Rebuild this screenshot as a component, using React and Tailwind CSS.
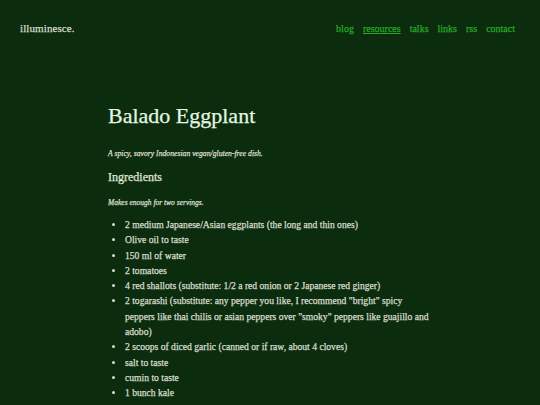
export default function App() {
  const items = [
    "2 medium Japanese/Asian eggplants (the long and thin ones)",
    "Olive oil to taste",
    "150 ml of water",
    "2 tomatoes",
    "4 red shallots (substitute: 1/2 a red onion or 2 Japanese red ginger)",
    "2 togarashi (substitute: any pepper you like, I recommend \"bright\" spicy peppers like thai chilis or asian peppers over \"smoky\" peppers like guajillo and adobo)",
    "2 scoops of diced garlic (canned or if raw, about 4 cloves)",
    "salt to taste",
    "cumin to taste",
    "1 bunch kale",
    "2 onions",
  ];
  return (
    <div className="w-[540px] h-[405px] overflow-hidden bg-[#0b2d0e] text-[#d8dccf] [-webkit-text-stroke:0.25px_currentColor]" style={{ fontFamily: '"Liberation Serif", "DejaVu Serif", serif' }}>
      <header className="flex items-center justify-between pl-[20px] pr-[25px] pt-[19px] h-[37px]">
        <div className="text-[11px] text-[#d6dcd0] tracking-[0.1px]">illuminesce.</div>
        <nav className="flex gap-[9px] text-[10px] text-[#26a826]">
          <span>blog</span>
          <span className="underline">resources</span>
          <span>talks</span>
          <span>links</span>
          <span>rss</span>
          <span>contact</span>
        </nav>
      </header>
      <main className="ml-[108px] w-[324px] pt-[66px]">
        <h1 className="text-[22px] leading-[26px] text-[#e4f7e2] font-normal">Balado Eggplant</h1>
        <p className="mt-[19px] text-[7.7px] italic leading-[12px]">A spicy, savory Indonesian vegan/gluten-free dish.</p>
        <h2 className="mt-[10px] text-[12px] leading-[14px] text-[#e0e6da]">Ingredients</h2>
        <p className="mt-[13px] text-[7.5px] italic leading-[12px]">Makes enough for two servings.</p>
        <ul className="mt-[8px] list-disc pl-[17px] text-[9.6px] leading-[15.3px]">
          {items.map((t, i) => (
            <li key={i}>{t}</li>
          ))}
        </ul>
      </main>
    </div>
  );
}
